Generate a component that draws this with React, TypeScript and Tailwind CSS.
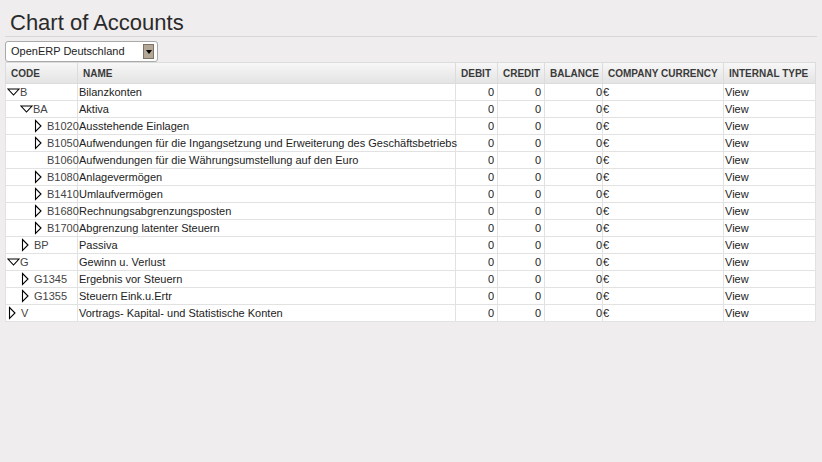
import React from "react";

type Account = {
  code: string;
  name: string;
  level: number;
  state: "open" | "closed" | "leaf";
};

const accounts: Account[] = [
  { code: "B", name: "Bilanzkonten", level: 0, state: "open" },
  { code: "BA", name: "Aktiva", level: 1, state: "open" },
  { code: "B1020", name: "Ausstehende Einlagen", level: 2, state: "closed" },
  {
    code: "B1050",
    name: "Aufwendungen für die Ingangsetzung und Erweiterung des Geschäftsbetriebs",
    level: 2,
    state: "closed",
  },
  { code: "B1060", name: "Aufwendungen für die Währungsumstellung auf den Euro", level: 2, state: "leaf" },
  { code: "B1080", name: "Anlagevermögen", level: 2, state: "closed" },
  { code: "B1410", name: "Umlaufvermögen", level: 2, state: "closed" },
  { code: "B1680", name: "Rechnungsabgrenzungsposten", level: 2, state: "closed" },
  { code: "B1700", name: "Abgrenzung latenter Steuern", level: 2, state: "closed" },
  { code: "BP", name: "Passiva", level: 1, state: "closed" },
  { code: "G", name: "Gewinn u. Verlust", level: 0, state: "open" },
  { code: "G1345", name: "Ergebnis vor Steuern", level: 1, state: "closed" },
  { code: "G1355", name: "Steuern Eink.u.Ertr", level: 1, state: "closed" },
  { code: "V", name: "Vortrags- Kapital- und Statistische Konten", level: 0, state: "closed" },
];

const TreeToggle = ({ state }: { state: Account["state"] }) => {
  if (state === "open") {
    return (
      <svg width="13" height="16" viewBox="0 0 13 16" className="shrink-0">
        <polygon points="1,5 12,5 6.5,11" fill="white" stroke="black" strokeWidth="1.1" />
      </svg>
    );
  }
  if (state === "closed") {
    return (
      <svg width="14" height="16" viewBox="0 0 14 16" className="shrink-0">
        <polygon points="2.5,2.5 8,8 2.5,13.5" fill="white" stroke="black" strokeWidth="1.1" />
      </svg>
    );
  }
  return <span className="inline-block w-[14px] shrink-0" />;
};

const indent = ["pl-px", "pl-[14px]", "pl-[27px]"];

const App = () => {
  return (
    <div className="min-h-[462px] bg-[#efeded] px-[5px] font-['Liberation_Sans',Arial,sans-serif] text-[11px] text-[#222]">
      <h1 className="border-b border-[#d8d6d6] pl-[5px] pt-[10px] text-[22px] leading-[26px] text-[#2a2a2a]">
        Chart of Accounts
      </h1>

      <div className="mt-[4px] flex h-[21px] w-[153px] items-center justify-between rounded-[3px] border border-[#a9a9a9] bg-white pl-[5px] pr-[3px]">
        <span className="leading-none">OpenERP Deutschland</span>
        <span className="flex h-[15px] w-[11px] items-center justify-center border border-[#7d7264] bg-[#b3a795]">
          <svg width="6" height="4" viewBox="0 0 6 4">
            <polygon points="0,0 6,0 3,4" fill="black" />
          </svg>
        </span>
      </div>

      <table className="w-[810px] table-fixed border-collapse border border-[#dcdcdc] bg-white">
        <colgroup>
          <col className="w-[72px]" />
          <col className="w-[378px]" />
          <col className="w-[42px]" />
          <col className="w-[47px]" />
          <col className="w-[58px]" />
          <col className="w-[121px]" />
          <col className="w-[92px]" />
        </colgroup>
        <thead>
          <tr className="h-[21px] bg-gradient-to-b from-[#f7f7f7] to-[#e3e3e3] text-left text-[10px] font-bold text-[#3a3a3a]">
            <th className="border border-[#dcdcdc] py-0 pl-[5px]">CODE</th>
            <th className="border border-[#dcdcdc] py-0 pl-[5px]">NAME</th>
            <th className="border border-[#dcdcdc] py-0 pl-[5px]">DEBIT</th>
            <th className="border border-[#dcdcdc] py-0 pl-[5px]">CREDIT</th>
            <th className="border border-[#dcdcdc] py-0 pl-[5px]">BALANCE</th>
            <th className="border border-[#dcdcdc] py-0 pl-[5px]">COMPANY CURRENCY</th>
            <th className="border border-[#dcdcdc] py-0 pl-[5px]">INTERNAL TYPE</th>
          </tr>
        </thead>
        <tbody>
          {accounts.map((a) => (
            <tr key={a.code} className="h-[17px] leading-[16px]">
              <td className="overflow-visible whitespace-nowrap border border-[#e2e2e2] p-0">
                <div className={`flex items-center ${indent[a.level]} text-[#444]`}>
                  <TreeToggle state={a.state} />
                  <span>{a.code}</span>
                </div>
              </td>
              <td className="whitespace-nowrap border border-[#e2e2e2] py-0 pl-px">{a.name}</td>
              <td className="border border-[#e2e2e2] py-0 pr-[3px] text-right">0</td>
              <td className="border border-[#e2e2e2] py-0 pr-[3px] text-right">0</td>
              <td className="border border-[#e2e2e2] py-0 pr-0 text-right">0</td>
              <td className="border border-[#e2e2e2] py-0 pl-0">€</td>
              <td className="border border-[#e2e2e2] py-0 pl-px">View</td>
            </tr>
          ))}
        </tbody>
      </table>
    </div>
  );
};

export default App;
